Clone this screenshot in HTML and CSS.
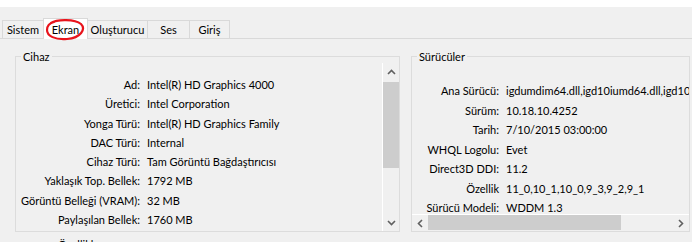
FILE: index.html
```html
<!DOCTYPE html>
<html lang="tr">
<head>
    <meta charset="UTF-8">
    <title>DirectX Tanı Aracı - Ekran</title>
    <link rel="stylesheet" href="styles.css">
</head>
<body>
    <div class="top-strip"></div>
    <div class="tabs">
        <div class="tab tab-sistem">Sistem</div>
        <div class="tab tab-ekran active">Ekran
            <svg class="mark" width="40" height="24" viewBox="0 0 40 24">
                <path d="M6 5 C12 1 30 1 36 6 C41 11 36 20 22 21 C10 22 2 18 2 12 C2 8 5 5 9 4" fill="none" stroke="#e8141c" stroke-width="2.2" stroke-linecap="round"/>
            </svg>
        </div>
        <div class="tab tab-olus">Oluşturucu</div>
        <div class="tab tab-ses">Ses</div>
        <div class="tab tab-giris">Giriş</div>
    </div>

    <div class="page">
        <div class="group device">
            <span class="caption">Cihaz</span>
            <div class="pane">
                <div class="props">
                    <span class="label">Ad:</span><span class="value">Intel(R) HD Graphics 4000</span>
                    <span class="label">Üretici:</span><span class="value">Intel Corporation</span>
                    <span class="label">Yonga Türü:</span><span class="value">Intel(R) HD Graphics Family</span>
                    <span class="label">DAC Türü:</span><span class="value">Internal</span>
                    <span class="label">Cihaz Türü:</span><span class="value">Tam Görüntü Bağdaştırıcısı</span>
                    <span class="label">Yaklaşık Top. Bellek:</span><span class="value">1792 MB</span>
                    <span class="label">Görüntü Belleği (VRAM):</span><span class="value">32 MB</span>
                    <span class="label">Paylaşılan Bellek:</span><span class="value">1760 MB</span>
                </div>
                <div class="vbar">
                    <div class="arrow">
                        <svg width="9" height="6" viewBox="0 0 9 6"><path d="M1 5 L4.5 1.5 L8 5" fill="none" stroke="#606060" stroke-width="1.6"/></svg>
                    </div>
                    <div class="track"><div class="thumb"></div></div>
                    <div class="arrow">
                        <svg width="9" height="6" viewBox="0 0 9 6"><path d="M1 1 L4.5 4.5 L8 1" fill="none" stroke="#606060" stroke-width="1.6"/></svg>
                    </div>
                </div>
            </div>
        </div>

        <div class="group drivers">
            <span class="caption">Sürücüler</span>
            <div class="pane">
                <div class="props">
                    <span class="label">Ana Sürücü:</span><span class="value">igdumdim64.dll,igd10iumd64.dll,igd10iumd64.dll</span>
                    <span class="label">Sürüm:</span><span class="value">10.18.10.4252</span>
                    <span class="label">Tarih:</span><span class="value">7/10/2015 03:00:00</span>
                    <span class="label">WHQL Logolu:</span><span class="value">Evet</span>
                    <span class="label">Direct3D DDI:</span><span class="value">11.2</span>
                    <span class="label">Özellik</span><span class="value">11_0,10_1,10_0,9_3,9_2,9_1</span>
                    <span class="label">Sürücü Modeli:</span><span class="value">WDDM 1.3</span>
                </div>
                <div class="hbar">
                    <div class="arrow">
                        <svg width="6" height="9" viewBox="0 0 6 9"><path d="M5 1 L1.5 4.5 L5 8" fill="none" stroke="#606060" stroke-width="1.6"/></svg>
                    </div>
                    <div class="track"><div class="thumb"></div></div>
                    <div class="arrow">
                        <svg width="6" height="9" viewBox="0 0 6 9"><path d="M1 1 L4.5 4.5 L1 8" fill="none" stroke="#606060" stroke-width="1.6"/></svg>
                    </div>
                </div>
            </div>
        </div>
    </div>

    <div class="next-group">Özellikler</div>
</body>
</html>
```

FILE: styles.css
```css
body {
    margin: 0;
    width: 692px;
    height: 242px;
    overflow: hidden;
    background-color: #f0f0f0;
    font-family: Lato, "Noto Sans", sans-serif;
    font-size: 11px;
    color: #000;
}

.top-strip {
    height: 7px;
    background-color: #fff;
}

/* tab strip */
.tabs {
    display: flex;
    align-items: flex-end;
    height: 31px;
    padding-left: 2px;
    border-bottom: 1px solid #d9d9d9;
}

.tab {
    position: relative;
    flex: none;
    height: 18px;
    line-height: 18px;
    border: 1px solid #d9d9d9;
    border-bottom: none;
    margin-right: -1px;
    text-align: center;
    box-sizing: border-box;
}

.tab.active {
    height: 21px;
    line-height: 21px;
    background-color: #fff;
    margin-bottom: -1px;
    z-index: 1;
}

.tab-sistem { width: 42px; }
.tab-ekran { width: 45px; }
.tab-olus { width: 61px; }
.tab-ses { width: 43px; }
.tab-giris { width: 41px; }

.mark {
    position: absolute;
    left: 1px;
    top: -1px;
}

/* tab page */
.page {
    display: flex;
    gap: 11px;
    padding: 17px 2px 0 15px;
}

.group {
    position: relative;
    border: 1px solid #dcdcdc;
    box-sizing: border-box;
    height: 176px;
    padding-top: 6px;
}

.caption {
    position: absolute;
    top: -8px;
    left: 5px;
    padding: 0 2px;
    line-height: 16px;
    background-color: #f0f0f0;
}

.device {
    width: 386px;
}

.drivers {
    width: 279px;
}

.pane {
    display: flex;
    height: 168px;
}

.drivers .pane {
    flex-direction: column;
}

.props {
    flex: 1;
    min-width: 0;
    min-height: 0;
    display: grid;
    column-gap: 7px;
    white-space: nowrap;
    align-content: start;
    overflow: hidden;
}

.device .props {
    grid-template-columns: 124px auto;
    line-height: 19.3px;
    padding-top: 12px;
}

.drivers .props {
    grid-template-columns: 87px auto;
    line-height: 19.5px;
    padding-top: 18px;
}

.label {
    text-align: right;
}

/* scroll bars */
.vbar {
    flex: none;
    width: 16px;
    border-left: 1px solid #fff;
    display: flex;
    flex-direction: column;
}

.vbar .arrow {
    height: 17px;
    display: flex;
    align-items: center;
    justify-content: center;
}

.vbar .track {
    flex: 1;
    padding-top: 2px;
}

.vbar .thumb {
    height: 86px;
    background-color: #cdcdcd;
}

.hbar {
    flex: none;
    height: 16px;
    border-top: 1px solid #fff;
    display: flex;
}

.hbar .arrow {
    width: 16px;
    display: flex;
    align-items: center;
    justify-content: center;
}

.hbar .track {
    flex: 1;
}

.hbar .thumb {
    width: 193px;
    height: 15px;
    background-color: #cdcdcd;
}

.next-group {
    padding: 6px 0 0 58px;
}
```
